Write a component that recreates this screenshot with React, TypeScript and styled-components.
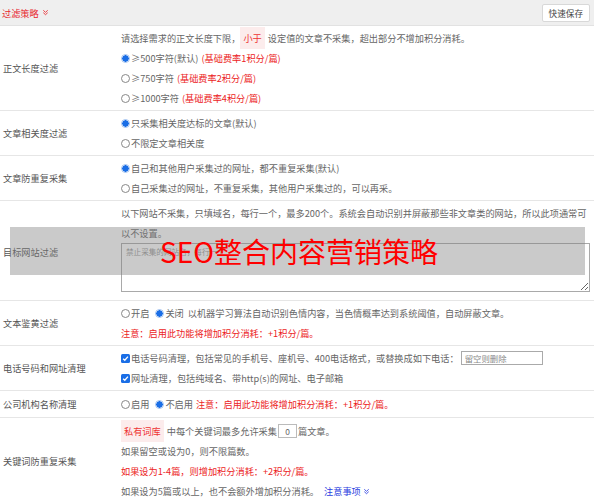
import React from "react";
import styled, { createGlobalStyle } from "styled-components";

const Global = createGlobalStyle`
  html, body { margin: 0; padding: 0; background: #fff; }
  body {
    font-family: "Noto Sans CJK SC", "Noto Sans", sans-serif;
    font-size: 9.2px;
    color: #666;
  }
  * { box-sizing: border-box; }
`;

const Page = styled.div`
  position: relative;
  width: 594px;
`;

const Header = styled.div`
  height: 26px;
  background: #efefef;
  border-bottom: 1px solid #e2e2e2;
  display: flex;
  align-items: center;
  justify-content: space-between;
  padding: 0 4px 0 2px;
`;

const Title = styled.div`
  color: #e8262c;
  font-size: 9.2px;
  display: flex;
  align-items: center;
  gap: 3px;
`;

const SaveButton = styled.button`
  font-family: inherit;
  font-size: 8.6px;
  color: #444;
  background: #fff;
  border: 1px solid #d8d8d8;
  border-radius: 2px;
  height: 18px;
  padding: 0 6px;
`;

const Row = styled.div<{ $pad?: string }>`
  display: grid;
  grid-template-columns: 121px 1fr;
  align-items: center;
  border-bottom: 1px solid #e6e6e6;
  padding: ${(p) => p.$pad || "2px 0"};
`;

const Label = styled.div<{ $shift?: number }>`
  padding-left: 3px;
  color: #555;
  transform: translateY(${(p) => p.$shift || 0}px);
`;

const Content = styled.div`
  display: flex;
  flex-direction: column;
  padding-right: 4px;
`;

const Line = styled.div`
  height: 20px;
  line-height: 20px;
  display: flex;
  align-items: center;
  white-space: nowrap;
`;

const Red = styled.span`
  color: #ec1c24;
`;

const Blue = styled.span`
  color: #2b3fe0;
  display: inline-flex;
  align-items: center;
  gap: 2px;
`;

const Tag = styled.span`
  color: #e33;
  background: #fcecec;
  padding: 1px 3px;
  margin-right: 3px;
`;

const RadioDot = styled.span<{ $on?: boolean }>`
  display: inline-block;
  width: 9px;
  height: 9px;
  border-radius: 50%;
  margin-right: 1px;
  flex: none;
  border: 1px solid ${(p) => (p.$on ? "#9ec0f0" : "#888")};
  background: ${(p) =>
    p.$on ? "radial-gradient(circle, #1a6ee6 0 3px, #fff 3.5px)" : "#fff"};
`;

const Check = styled.span`
  display: inline-flex;
  align-items: center;
  justify-content: center;
  width: 9px;
  height: 9px;
  border-radius: 1.5px;
  background: #1a6ee6;
  margin-right: 1px;
  flex: none;
`;

const Gap = styled.span<{ $w: number }>`
  display: inline-block;
  width: ${(p) => p.$w}px;
`;

const TextArea = styled.textarea`
  width: 469px;
  height: 49px;
  margin: 0 0 8px 0;
  border: 1px solid #a9a9a9;
  font-family: inherit;
  font-size: 7.6px;
  padding: 2px 4px;
  resize: vertical;
  &::placeholder { color: #999; }
`;

const PhoneInput = styled.input`
  width: 82px;
  height: 14px;
  border: 1px solid #aaa;
  font-family: inherit;
  font-size: 8.4px;
  padding: 0 3px;
  margin-left: 2px;
  color: #666;
  &::placeholder { color: #888; }
`;

const NumInput = styled.input`
  width: 19px;
  height: 14px;
  border: 1px solid #bbb;
  font-family: inherit;
  font-size: 8.4px;
  text-align: center;
  margin: 0 1px;
  color: #666;
`;

const Overlay = styled.div`
  position: absolute;
  left: 10px;
  top: 227px;
  width: 575px;
  height: 48px;
  background: rgba(128, 128, 128, 0.42);
  display: flex;
  align-items: center;
  padding-left: 150px;
  pointer-events: none;
`;

const OverlayText = styled.div`
  color: #ff0000;
  font-size: 28px;
  font-family: "Noto Sans CJK SC", "Noto Sans", sans-serif;
  line-height: 1;
  letter-spacing: 0;
`;

const Chevron = ({ color }: { color: string }) => (
  <svg width="7" height="7" viewBox="0 0 8 8">
    <path d="M1.5 1.5 L4 3.8 L6.5 1.5 M1.5 4.2 L4 6.5 L6.5 4.2" fill="none" stroke={color} strokeWidth="1" />
  </svg>
);

const Tick = () => (
  <svg width="7" height="7" viewBox="0 0 8 8">
    <path d="M1.3 4.2 L3.2 6 L6.8 1.8" fill="none" stroke="#fff" strokeWidth="1.5" />
  </svg>
);

export default function App() {
  return (
    <Page>
      <Global />
      <Header>
        <Title>
          过滤策略 <Chevron color="#e8262c" />
        </Title>
        <SaveButton>快速保存</SaveButton>
      </Header>

      <Row>
        <Label>正文长度过滤</Label>
        <Content>
          <Line>
            请选择需求的正文长度下限，<Tag>小于</Tag>设定值的文章不采集，超出部分不增加积分消耗。
          </Line>
          <Line>
            <RadioDot $on />≥500字符(默认)<Gap $w={3} /><Red>(基础费率1积分/篇)</Red>
          </Line>
          <Line>
            <RadioDot />≥750字符<Gap $w={3} /><Red>(基础费率2积分/篇)</Red>
          </Line>
          <Line>
            <RadioDot />≥1000字符<Gap $w={3} /><Red>(基础费率4积分/篇)</Red>
          </Line>
        </Content>
      </Row>

      <Row>
        <Label>文章相关度过滤</Label>
        <Content>
          <Line>
            <RadioDot $on />只采集相关度达标的文章(默认)
          </Line>
          <Line>
            <RadioDot />不限定文章相关度
          </Line>
        </Content>
      </Row>

      <Row>
        <Label>文章防重复采集</Label>
        <Content>
          <Line>
            <RadioDot $on />自己和其他用户采集过的网址，都不重复采集(默认)
          </Line>
          <Line>
            <RadioDot />自己采集过的网址，不重复采集，其他用户采集过的，可以再采。
          </Line>
        </Content>
      </Row>

      <Row $pad="2px 0 0 0">
        <Label $shift={0}>目标网站过滤</Label>
        <Content>
          <Line>
            以下网站不采集，只填域名，每行一个，最多200个。系统会自动识别并屏蔽那些非文章类的网站，所以此项通常可
          </Line>
          <Line>以不设置。</Line>
          <TextArea placeholder="禁止采集的网站名，每行一个" />
        </Content>
      </Row>

      <Row>
        <Label>文本鉴黄过滤</Label>
        <Content>
          <Line>
            <RadioDot />开启<Gap $w={6} />
            <RadioDot $on />关闭<Gap $w={4} />以机器学习算法自动识别色情内容，当色情概率达到系统阈值，自动屏蔽文章。
          </Line>
          <Line>
            <Red>注意：启用此功能将增加积分消耗：+1积分/篇。</Red>
          </Line>
        </Content>
      </Row>

      <Row>
        <Label>电话号码和网址清理</Label>
        <Content>
          <Line>
            <Check><Tick /></Check>电话号码清理，包括常见的手机号、座机号、400电话格式，或替换成如下电话：
            <PhoneInput placeholder="留空则删除" />
          </Line>
          <Line>
            <Check><Tick /></Check>网址清理，包括纯域名、带http(s)的网址、电子邮箱
          </Line>
        </Content>
      </Row>

      <Row $pad="3px 0 3px 0">
        <Label>公司机构名称清理</Label>
        <Content>
          <Line>
            <RadioDot />启用<Gap $w={6} />
            <RadioDot $on />不启用<Gap $w={3} />
            <Red>注意：启用此功能将增加积分消耗：+1积分/篇。</Red>
          </Line>
        </Content>
      </Row>

      <Row $pad="3px 0 6px 0">
        <Label>关键词防重复采集</Label>
        <Content>
          <Line>
            <Tag>私有词库</Tag>中每个关键词最多允许采集
            <NumInput defaultValue="0" />篇文章。
          </Line>
          <Line>如果留空或设为0，则不限篇数。</Line>
          <Line>
            <Red>如果设为1-4篇，则增加积分消耗：+2积分/篇。</Red>
          </Line>
          <Line>
            如果设为5篇或以上，也不会额外增加积分消耗。<Gap $w={5} />
            <Blue>
              注意事项<Chevron color="#2b3fe0" />
            </Blue>
          </Line>
        </Content>
      </Row>

      <Overlay>
        <OverlayText>SEO整合内容营销策略</OverlayText>
      </Overlay>
    </Page>
  );
}
